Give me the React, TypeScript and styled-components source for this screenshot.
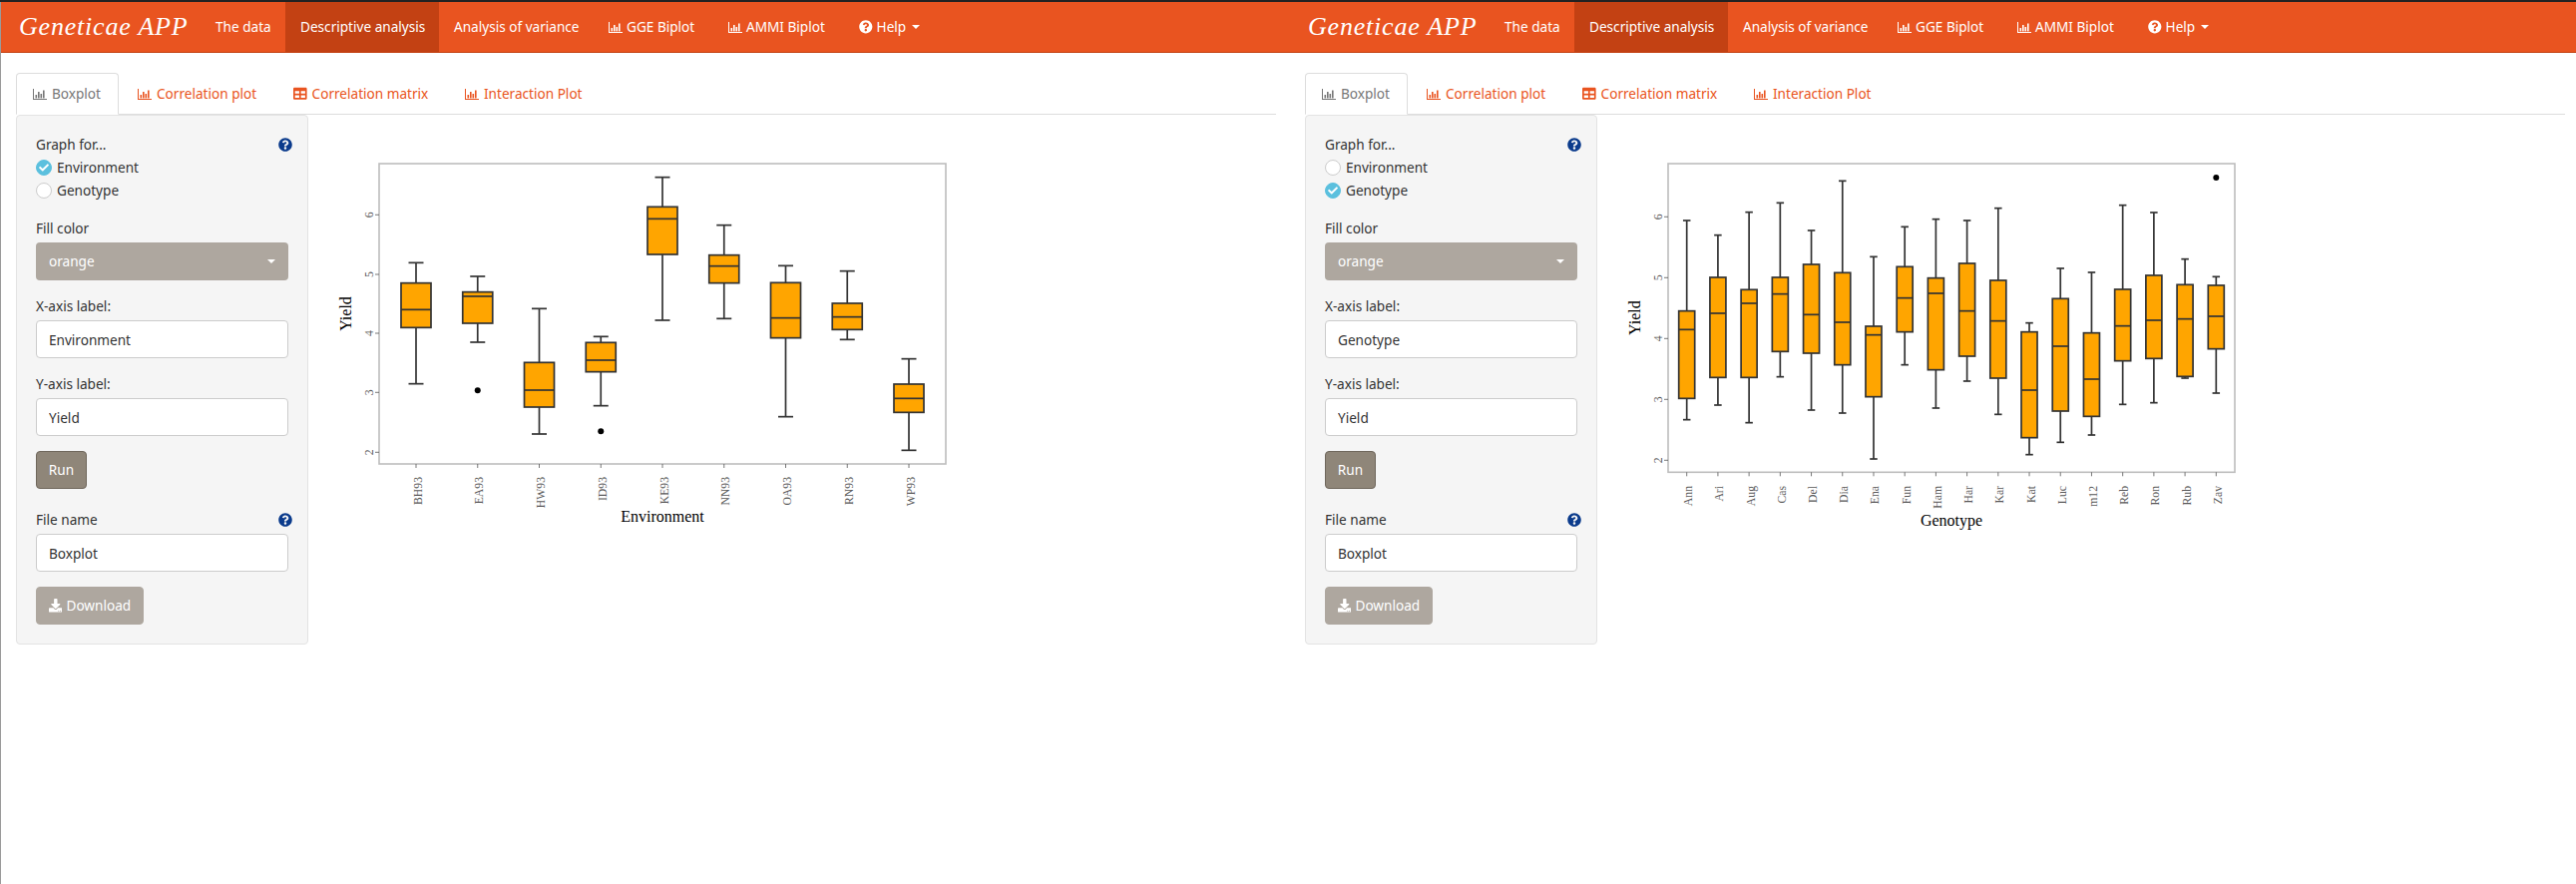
import React from "react";
import styled, { createGlobalStyle } from "styled-components";
import { FaTable, FaQuestionCircle, FaDownload, FaCheck } from "react-icons/fa";

const Global = createGlobalStyle`
  html, body { margin: 0; padding: 0; background: #fff; }
  body { font-family: "Noto Sans", "Open Sans", sans-serif; font-size: 13.6px; line-height: 20px; color: #333; overflow: hidden; }
  * { box-sizing: border-box; }
`;

const Page = styled.div`
  position: relative;
  display: flex;
  width: 2582px;
  height: 886px;
  border-top: 2px solid #222;
  overflow: hidden;
  &::before {
    content: "";
    position: absolute;
    left: 0; top: 0; bottom: 0;
    width: 1px;
    background: #9a9a9a;
    z-index: 2;
  }
`;
const Panel = styled.section`
  flex: 0 0 1292px;
  width: 1292px;
`;
const Navbar = styled.nav`
  display: flex;
  height: 51px;
  background: #e95420;
  border-bottom: 1px solid #c34113;
  color: #fff;
`;
const Brand = styled.div`
  flex: 0 0 201px;
  padding: 10px 0 0 19px;
  font-family: "Liberation Serif", serif;
  font-style: italic;
  font-size: 26px;
  line-height: 30px;
  letter-spacing: 0.8px;
  color: #fff;
`;
const NavItem = styled.a<{ $w: number; $active?: boolean }>`
  flex: 0 0 ${(p) => p.$w}px;
  display: flex;
  align-items: center;
  gap: 4px;
  height: 50px;
  padding-left: 15px;
  white-space: nowrap;
  background: ${(p) => (p.$active ? "#c34113" : "transparent")};
  color: #fff;
`;
const Caret = styled.i`
  display: inline-block;
  width: 0;
  height: 0;
  margin-left: 2px;
  border-left: 4px solid transparent;
  border-right: 4px solid transparent;
  border-top: 4px solid #fff;
`;
const Main = styled.div`
  padding: 20px 13px 0 16px;
`;
const TabBar = styled.div`
  display: flex;
  gap: 2px;
  height: 42px;
  border-bottom: 1px solid #ddd;
`;
const Tab = styled.a<{ $w: number; $active?: boolean }>`
  flex: 0 0 ${(p) => p.$w}px;
  display: flex;
  align-items: center;
  gap: 5px;
  height: 42px;
  padding-left: 16px;
  white-space: nowrap;
  color: ${(p) => (p.$active ? "#777" : "#e95420")};
  background: ${(p) => (p.$active ? "#fff" : "transparent")};
  border: 1px solid ${(p) => (p.$active ? "#ddd" : "transparent")};
  border-bottom-color: ${(p) => (p.$active ? "#fff" : "transparent")};
  border-radius: 4px 4px 0 0;
`;
const Content = styled.div`
  display: flex;
  align-items: flex-start;
`;
const Well = styled.aside`
  flex: 0 0 293px;
  width: 293px;
  padding: 19px;
  background: #f5f5f5;
  border: 1px solid #e3e3e3;
  border-radius: 4px;
`;
const FormGroup = styled.div<{ $mb?: number }>`
  margin-bottom: ${(p) => p.$mb ?? 16}px;
`;
const LabelRow = styled.div<{ $mb?: number }>`
  display: flex;
  justify-content: space-between;
  align-items: center;
  height: 20px;
  margin-bottom: ${(p) => p.$mb ?? 4}px;
  width: 253px;
  color: #333;
`;
const HelpMark = styled.span`
  display: flex;
  margin-right: -4px;
  color: #0b3b8c;
  font-size: 14px;
`;
const RadioRow = styled.div`
  display: flex;
  align-items: center;
  gap: 5px;
  height: 23px;
`;
const RadioDot = styled.span<{ $on?: boolean }>`
  display: flex;
  align-items: center;
  justify-content: center;
  width: 16px;
  height: 16px;
  border-radius: 50%;
  font-size: 10px;
  color: #fff;
  background: ${(p) => (p.$on ? "#5bc0de" : "#fff")};
  border: 1px solid ${(p) => (p.$on ? "#5bc0de" : "#ccc")};
`;
const SelectBox = styled.div`
  display: flex;
  align-items: center;
  justify-content: space-between;
  width: 253px;
  height: 38px;
  padding: 0 13px;
  background: #aea79f;
  border-radius: 4px;
  color: #fff;
`;
const TextInput = styled.input`
  display: block;
  width: 253px;
  height: 38px;
  padding: 0 12px;
  background: #fff;
  border: 1px solid #ccc;
  border-radius: 4px;
  color: #333;
  font: inherit;
  outline: none;
`;
const RunButton = styled.button`
  display: block;
  width: 51px;
  height: 38px;
  padding: 0;
  margin-bottom: 21px;
  background: #8f8679;
  border: 1px solid #6f675c;
  border-radius: 4px;
  color: #fff;
  font: inherit;
`;
const DownloadButton = styled.button`
  display: flex;
  align-items: center;
  justify-content: center;
  gap: 4px;
  width: 108px;
  height: 38px;
  padding: 0;
  background: #aea79f;
  border: 1px solid #aea79f;
  border-radius: 4px;
  color: #fff;
  font: inherit;
`;
const ChartFrame = styled.figure<{ $ml: number }>`
  margin: 35px 0 0 ${(p) => p.$ml}px;
`;
const TickText = styled.text`
  font-family: "Liberation Serif", serif;
  font-size: 11.7px;
  fill: #5a5a5a;
`;
const TitleText = styled.text`
  font-family: "Liberation Serif", serif;
  font-size: 16px;
  fill: #000;
`;

const BarIcon = () => (
  <svg width="14" height="13" viewBox="0 0 14 13" fill="currentColor" aria-hidden="true">
    <rect x="0" y="1" width="1" height="11" />
    <rect x="0" y="11" width="14" height="1" />
    <rect x="2.5" y="7" width="1.6" height="3.4" />
    <rect x="5" y="4" width="1.6" height="6.4" />
    <rect x="7.5" y="6" width="1.6" height="4.4" />
    <rect x="10" y="2.5" width="1.6" height="7.9" />
  </svg>
);

type BoxDatum = { n: string; x: number; w: number[]; o?: number };
type ChartSpec = {
  ox: number;
  left: number;
  right: number;
  bottom: number;
  labelTop: number;
  titleBase: number;
  boxW: number;
  capW: number;
  ticks: number[];
  yTickBase: number;
  yTitleBase: number;
  title: string;
  data: BoxDatum[];
};

const z = (v: number) => v / 3;

const names1 = ["BH93", "EA93", "HW93", "ID93", "KE93", "NN93", "OA93", "RN93", "WP93"];
const vals1: number[][] = [
  [340, 401, 481, 535, 704],
  [381, 428, 441, 522, 579, 724],
  [478, 640, 723, 774, 855],
  [562, 580, 633, 668, 770, 847],
  [83, 172, 208, 315, 513],
  [227, 317, 350, 401, 508],
  [349, 400, 506, 566, 803],
  [365, 462, 503, 541, 571],
  [629, 705, 748, 790, 904],
];
const names2 = ["Ann", "Ari", "Aug", "Cas", "Del", "Dia", "Ena", "Fun", "Ham", "Har", "Kar", "Kat", "Luc", "m12", "Reb", "Ron", "Rub", "Zav"];
const vals2: number[][] = [
  [213, 485, 541, 748, 812],
  [257, 384, 492, 685, 768],
  [188, 421, 462, 685, 821],
  [160, 384, 434, 607, 683],
  [243, 345, 496, 612, 783],
  [94, 370, 519, 647, 792],
  [322, 531, 557, 743, 930],
  [232, 352, 446, 548, 647],
  [209, 386, 432, 662, 777],
  [213, 342, 485, 621, 696],
  [176, 393, 515, 687, 796],
  [521, 548, 723, 866, 917],
  [357, 448, 591, 786, 880],
  [369, 551, 690, 802, 858],
  [167, 420, 530, 635, 766],
  [189, 378, 513, 628, 761],
  [329, 406, 509, 682, 687],
  [382, 408, 501, 599, 732, 84],
];

const chart1: ChartSpec = {
  ox: 335,
  left: 380,
  right: 948,
  bottom: 315,
  labelTop: 328,
  titleBase: 373,
  boxW: 30,
  capW: 15,
  ticks: [65.3, 125, 184, 243.3, 303.3],
  yTickBase: 374,
  yTitleBase: 352,
  title: "Environment",
  data: names1.map((n, i) => ({ n, x: 417 + i * 61.75, w: vals1[i].slice(0, 5), o: vals1[i][5] })),
};
const chart2: ChartSpec = {
  ox: 1625,
  left: 1672,
  right: 2240,
  bottom: 323.3,
  labelTop: 337,
  titleBase: 377,
  boxW: 16,
  capW: 7.5,
  ticks: [67.3, 128.3, 189.3, 250.3, 311.3],
  yTickBase: 1665.7,
  yTitleBase: 1644,
  title: "Genotype",
  data: names2.map((n, i) => ({ n, x: 1690.7 + i * 31.212, w: vals2[i].slice(0, 5), o: vals2[i][5] })),
};

const BoxChart = ({ s }: { s: ChartSpec }) => {
  const L = s.left - s.ox;
  const R = s.right - s.ox;
  const T = 14;
  const midY = (T + s.bottom) / 2;
  const midX = (L + R) / 2;
  return (
    <svg width="630" height="390" viewBox="0 0 630 390" role="img">
      <rect x={L} y={T} width={R - L} height={s.bottom - T} fill="#fff" stroke="#bdbdbd" strokeWidth="1.6" />
      {s.ticks.map((y, i) => (
        <g key={i}>
          <line x1={L - 4} x2={L} y1={y} y2={y} stroke="#555" strokeWidth="0.8" />
          <TickText transform={`translate(${s.yTickBase - s.ox} ${y}) rotate(-90)`} textAnchor="middle">
            {6 - i}
          </TickText>
        </g>
      ))}
      {s.data.map((d) => {
        const x = d.x - s.ox;
        const [wt, bt, med, bb, wb] = d.w.map(z);
        return (
          <g key={d.n}>
            <line x1={x} x2={x} y1={wt} y2={bt} stroke="#333" strokeWidth="1.7" />
            <line x1={x} x2={x} y1={bb} y2={wb} stroke="#333" strokeWidth="1.7" />
            <line x1={x - s.capW / 2} x2={x + s.capW / 2} y1={wt} y2={wt} stroke="#333" strokeWidth="1.7" />
            <line x1={x - s.capW / 2} x2={x + s.capW / 2} y1={wb} y2={wb} stroke="#333" strokeWidth="1.7" />
            <rect x={x - s.boxW / 2} y={bt} width={s.boxW} height={bb - bt} fill="#ffa500" stroke="#333" strokeWidth="1.7" />
            <line x1={x - s.boxW / 2} x2={x + s.boxW / 2} y1={med} y2={med} stroke="#333" strokeWidth="1.7" />
            {d.o !== undefined && <circle cx={x} cy={z(d.o)} r="3" fill="#000" />}
            <line x1={x} x2={x} y1={s.bottom} y2={s.bottom + 4} stroke="#555" strokeWidth="0.8" />
            <TickText transform={`translate(${x + 5.5} ${s.labelTop}) rotate(-90)`} textAnchor="end">
              {d.n}
            </TickText>
          </g>
        );
      })}
      <TitleText x={midX} y={s.titleBase} textAnchor="middle">
        {s.title}
      </TitleText>
      <TitleText transform={`translate(${s.yTitleBase - s.ox} ${midY}) rotate(-90)`} textAnchor="middle">
        Yield
      </TitleText>
    </svg>
  );
};

const Help = () => (
  <HelpMark>
    <FaQuestionCircle />
  </HelpMark>
);

const AppPanel = ({ env, xLabel, chart, ml }: { env: boolean; xLabel: string; chart: ChartSpec; ml: number }) => (
  <Panel>
    <Navbar>
      <Brand>Geneticae APP</Brand>
      <NavItem $w={85}>The data</NavItem>
      <NavItem $w={154} $active>Descriptive analysis</NavItem>
      <NavItem $w={155}>Analysis of variance</NavItem>
      <NavItem $w={120}><BarIcon />GGE Biplot</NavItem>
      <NavItem $w={131}><BarIcon />AMMI Biplot</NavItem>
      <NavItem $w={100}><FaQuestionCircle />Help<Caret /></NavItem>
    </Navbar>
    <Main>
      <TabBar>
        <Tab $w={103} $active><BarIcon />Boxplot</Tab>
        <Tab $w={154}><BarIcon />Correlation plot</Tab>
        <Tab $w={170}><FaTable />Correlation matrix</Tab>
        <Tab $w={153}><BarIcon />Interaction Plot</Tab>
      </TabBar>
      <Content>
        <Well>
          <FormGroup $mb={17}>
            <LabelRow $mb={1}>Graph for...<Help /></LabelRow>
            <RadioRow><RadioDot $on={env}>{env && <FaCheck />}</RadioDot>Environment</RadioRow>
            <RadioRow><RadioDot $on={!env}>{!env && <FaCheck />}</RadioDot>Genotype</RadioRow>
          </FormGroup>
          <FormGroup>
            <LabelRow>Fill color</LabelRow>
            <SelectBox>orange<Caret /></SelectBox>
          </FormGroup>
          <FormGroup>
            <LabelRow>X-axis label:</LabelRow>
            <TextInput readOnly value={xLabel} />
          </FormGroup>
          <FormGroup $mb={15}>
            <LabelRow>Y-axis label:</LabelRow>
            <TextInput readOnly value="Yield" />
          </FormGroup>
          <RunButton>Run</RunButton>
          <FormGroup $mb={15}>
            <LabelRow>File name<Help /></LabelRow>
            <TextInput readOnly value="Boxplot" />
          </FormGroup>
          <DownloadButton><FaDownload />Download</DownloadButton>
        </Well>
        <ChartFrame $ml={ml}>
          <BoxChart s={chart} />
        </ChartFrame>
      </Content>
    </Main>
  </Panel>
);

export default function App() {
  return (
    <>
      <Global />
      <Page>
        <AppPanel env xLabel="Environment" chart={chart1} ml={26} />
        <AppPanel env={false} xLabel="Genotype" chart={chart2} ml={24} />
      </Page>
    </>
  );
}
